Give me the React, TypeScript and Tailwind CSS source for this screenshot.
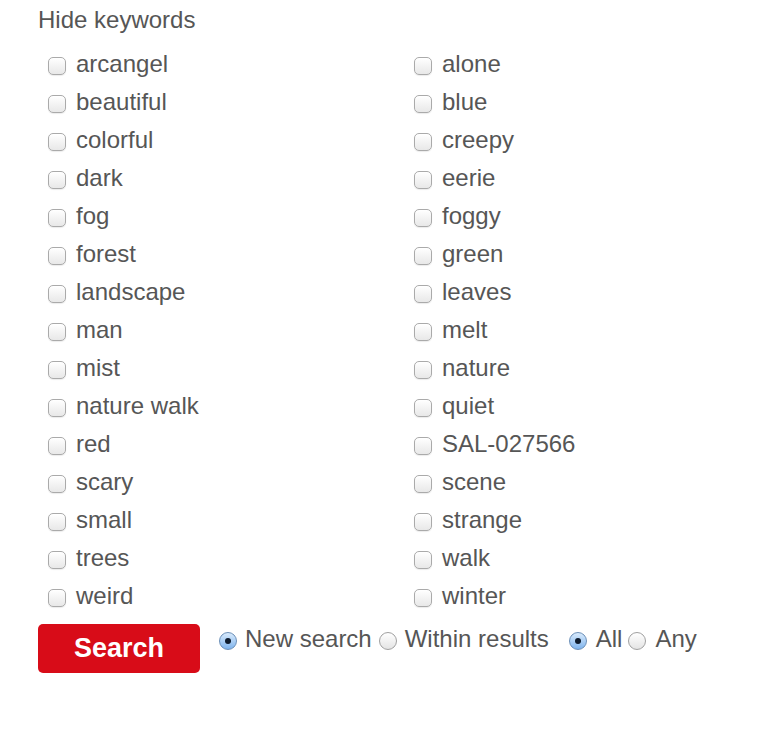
import React, { useState } from 'react';

const left = [
  'arcangel', 'beautiful', 'colorful', 'dark', 'fog', 'forest', 'landscape', 'man',
  'mist', 'nature walk', 'red', 'scary', 'small', 'trees', 'weird',
];
const right = [
  'alone', 'blue', 'creepy', 'eerie', 'foggy', 'green', 'leaves', 'melt',
  'nature', 'quiet', 'SAL-027566', 'scene', 'strange', 'walk', 'winter',
];

const Box: React.FC<{ checked: boolean }> = ({ checked }) => (
  <span
    className={`mt-[3px] ml-[10px] flex h-[18px] w-[18px] shrink-0 items-center justify-center rounded-[5px] border border-[#aaaaaa] shadow-[inset_0_1px_1px_rgba(255,255,255,0.9),0_1px_1px_rgba(0,0,0,0.08)] ${
      checked ? 'bg-gradient-to-b from-[#d6e8fb] to-[#7db1ea]' : 'bg-gradient-to-b from-white to-[#e8e8e8]'
    }`}
  >
    {checked && (
      <svg width="12" height="12" viewBox="0 0 12 12">
        <path d="M2 6.5 5 9.5 10 2.5" fill="none" stroke="#0b1c33" strokeWidth="2" />
      </svg>
    )}
  </span>
);

const Radio: React.FC<{ checked: boolean; onClick: () => void }> = ({ checked, onClick }) => (
  <span
    onClick={onClick}
    className={`mt-[3px] flex h-[18px] w-[18px] shrink-0 cursor-pointer items-center justify-center rounded-full border ${
      checked ? 'border-[#6b8fb8] bg-gradient-to-b from-[#d9ebfc] to-[#7eb3ec]' : 'border-[#a0a0a0] bg-gradient-to-b from-white to-[#e4e4e4]'
    }`}
  >
    {checked && <span className="h-[6px] w-[6px] rounded-full bg-[#0d1a2b]" />}
  </span>
);

export default function App() {
  const [checked, setChecked] = useState<Record<string, boolean>>({});
  const [mode, setMode] = useState('new');
  const [match, setMatch] = useState('all');

  const rows = left.map((l, i) => [l, right[i]]);

  const item = (k: string) => (
    <label
      key={k}
      className="flex h-[38px] cursor-pointer items-center"
      onClick={() => setChecked({ ...checked, [k]: !checked[k] })}
    >
      <Box checked={!!checked[k]} />
      <span className="ml-[10px]">{k}</span>
    </label>
  );

  return (
    <div
      className="min-h-[750px] bg-white pl-[38px] text-[24px] text-[#565656]"
      style={{ fontFamily: '"Liberation Sans", Arial, sans-serif' }}
    >
      <div className="h-[40px] leading-[40px]">Hide keywords</div>
      <div className="grid grid-cols-[366px_1fr] pt-[5px]">
        {rows.map(([a, b]) => (
          <React.Fragment key={a}>
            {item(a)}
            {item(b)}
          </React.Fragment>
        ))}
      </div>
      <div className="mt-[9px] flex items-start">
        <button className="h-[49px] w-[162px] rounded-[5px] bg-[#d80c18] text-[27px] font-bold text-white">
          Search
        </button>
        <div className="ml-[19px] flex h-[30px] items-center leading-none">
          <Radio checked={mode === 'new'} onClick={() => setMode('new')} />
          <span className="ml-[8px]">New search</span>
          <span className="ml-[7px]" />
          <Radio checked={mode === 'within'} onClick={() => setMode('within')} />
          <span className="ml-[8px]">Within results</span>
          <span className="ml-[20px]" />
          <Radio checked={match === 'all'} onClick={() => setMatch('all')} />
          <span className="ml-[9px]">All</span>
          <span className="ml-[6px]" />
          <Radio checked={match === 'any'} onClick={() => setMatch('any')} />
          <span className="ml-[9px]">Any</span>
        </div>
      </div>
    </div>
  );
}
